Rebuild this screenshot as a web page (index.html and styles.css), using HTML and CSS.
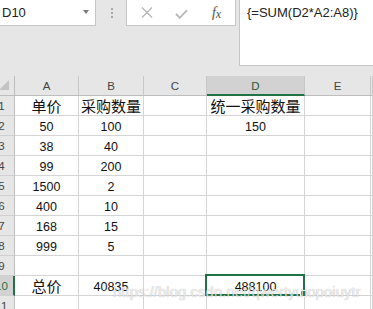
FILE: index.html
```html
<!DOCTYPE html>
<html lang="zh">
<head>
<meta charset="utf-8">
<link rel="stylesheet" href="styles.css">
</head>
<body>
<div class="app">
  <div class="toolbar">
    <div class="namebox"><span class="name">D10</span><span class="caret"></span></div>
    <div class="sep">
      <svg width="2" height="10" viewBox="0 0 2 10"><rect x="0" y="0" width="2" height="2"/><rect x="0" y="4" width="2" height="2"/><rect x="0" y="8" width="2" height="2"/></svg>
    </div>
    <div class="buttons">
      <span class="btn"><svg width="12" height="11" viewBox="0 0 12 11"><path d="M1 0.5 L11 10.5 M11 0.5 L1 10.5"/></svg></span>
      <span class="btn"><svg width="13" height="10" viewBox="0 0 13 10"><path d="M1 5 L4.8 8.8 L12 1.2"/></svg></span>
      <span class="btn fx"><i>f</i><i class="x">x</i></span>
    </div>
    <div class="formula">{=SUM(D2*A2:A8)}</div>
  </div>

  <div class="sheet">
    <div class="corner"><span class="tri"></span></div>
    <div class="h">A</div><div class="h">B</div><div class="h">C</div><div class="h sel">D</div><div class="h">E</div><div class="h"></div>

    <div class="rh"><span>1</span></div>
    <div class="c cjk">单价</div><div class="c cjk">采购数量</div><div class="c"></div><div class="c cjk">统一采购数量</div><div class="c"></div><div class="c"></div>

    <div class="rh"><span>2</span></div>
    <div class="c">50</div><div class="c">100</div><div class="c"></div><div class="c">150</div><div class="c"></div><div class="c"></div>

    <div class="rh"><span>3</span></div>
    <div class="c">38</div><div class="c">40</div><div class="c"></div><div class="c"></div><div class="c"></div><div class="c"></div>

    <div class="rh"><span>4</span></div>
    <div class="c">99</div><div class="c">200</div><div class="c"></div><div class="c"></div><div class="c"></div><div class="c"></div>

    <div class="rh"><span>5</span></div>
    <div class="c">1500</div><div class="c">2</div><div class="c"></div><div class="c"></div><div class="c"></div><div class="c"></div>

    <div class="rh"><span>6</span></div>
    <div class="c">400</div><div class="c">10</div><div class="c"></div><div class="c"></div><div class="c"></div><div class="c"></div>

    <div class="rh"><span>7</span></div>
    <div class="c">168</div><div class="c">15</div><div class="c"></div><div class="c"></div><div class="c"></div><div class="c"></div>

    <div class="rh"><span>8</span></div>
    <div class="c">999</div><div class="c">5</div><div class="c"></div><div class="c"></div><div class="c"></div><div class="c"></div>

    <div class="rh"><span>9</span></div>
    <div class="c"></div><div class="c"></div><div class="c"></div><div class="c"></div><div class="c"></div><div class="c"></div>

    <div class="rh sel"><span>10</span></div>
    <div class="c cjk">总价</div><div class="c">40835</div><div class="c"></div><div class="c active">488100<span class="handle"></span></div><div class="c"></div><div class="c"></div>

    <div class="rh"><span>11</span></div>
    <div class="c"></div><div class="c"></div><div class="c"></div><div class="c"></div><div class="c"></div><div class="c"></div>
  </div>

  <div class="watermark">https://blog.csdn.net/qwertyuiopoiuytr</div>
</div>
</body>
</html>
```

FILE: styles.css
```css
html, body {
  margin: 0;
  padding: 0;
}
body {
  background: #e6e6e6;
  font-family: "Liberation Sans", "Noto Sans CJK SC", sans-serif;
}
.app {
  position: relative;
  width: 373px;
  height: 309px;
  overflow: hidden;
  background: #e6e6e6;
}

/* ---------- formula bar ---------- */
.toolbar {
  display: flex;
  align-items: flex-start;
  height: 76px;
}
.namebox {
  box-sizing: border-box;
  width: 96px;
  height: 26px;
  background: #fff;
  border-right: 1px solid #c6c6c6;
  border-bottom: 1px solid #c6c6c6;
  display: flex;
  align-items: center;
  justify-content: space-between;
  padding: 0 6px 0 2px;
  font-size: 13px;
  line-height: 16px;
  color: #222;
}
.caret {
  width: 0;
  height: 0;
  border-left: 3.5px solid transparent;
  border-right: 3.5px solid transparent;
  border-top: 4px solid #7a7a7a;
  margin-top: -1px;
}
.sep {
  width: 30px;
  height: 26px;
  display: flex;
  align-items: center;
  justify-content: center;
}
.sep svg {
  fill: #a9a9a9;
  margin-left: 1px;
}
.buttons {
  box-sizing: border-box;
  width: 110px;
  height: 26px;
  background: #fff;
  border-left: 1px solid #c6c6c6;
  border-right: 1px solid #c6c6c6;
  border-bottom: 1px solid #c6c6c6;
  display: flex;
  align-items: center;
  padding-left: 2px;
}
.btn {
  width: 35px;
  height: 25px;
  display: flex;
  align-items: center;
  justify-content: center;
}
.btn svg {
  fill: none;
  stroke: #b7b7b7;
  stroke-width: 1.4;
}
.btn:nth-child(2) svg {
  stroke-width: 1.8;
  margin-top: 2px;
}
.fx {
  font-family: "Liberation Serif", serif;
  font-size: 14px;
  color: #505050;
  padding-top: 1px;
}
.fx i {
  font-style: italic;
}
.fx .x {
  font-size: 12px;
  margin-left: 0px;
  position: relative;
  top: 1px;
}
.formula {
  box-sizing: border-box;
  flex: 1;
  margin-left: 3px;
  height: 66px;
  background: #fff;
  border-left: 1px solid #c6c6c6;
  border-bottom: 1px solid #c6c6c6;
  padding: 5px 0 0 7px;
  font-size: 13px;
  line-height: 16px;
  color: #222;
  white-space: nowrap;
}

/* ---------- sheet ---------- */
.sheet {
  display: grid;
  grid-template-columns: 15px 64px 65px 63px 98px 66px 1fr;
  grid-template-rows: repeat(12, 20px);
  background: #fff;
}
.sheet > div {
  box-sizing: border-box;
  overflow: hidden;
}
.corner {
  background: #e6e6e6;
  border-right: 1px solid #bdbdbd;
  border-bottom: 1px solid #bdbdbd;
  position: relative;
}
.tri {
  position: absolute;
  left: 0;
  top: 4px;
  width: 0;
  height: 0;
  border-left: 10px solid transparent;
  border-bottom: 10px solid #c3c3c3;
  margin-left: -1px;
}
.h {
  background: #e6e6e6;
  border-right: 1px solid #c8c8c8;
  border-bottom: 1px solid #bdbdbd;
  display: flex;
  align-items: center;
  justify-content: center;
  font-size: 11.5px;
  color: #444;
  padding-top: 1px;
}
.h.sel {
  background: #d2d2d2;
  border-bottom: 2px solid #217346;
  color: #1d5c38;
}
.rh {
  background: #e6e6e6;
  border-right: 1px solid #bdbdbd;
  border-bottom: 1px solid #d0d0d0;
  display: flex;
  align-items: center;
  font-size: 11.5px;
  color: #444;
}
.rh span {
  flex: none;
  width: 25px;
  margin-left: -11px;
  text-align: center;
}
.rh.sel {
  background: #d2d2d2;
  border-right: 2px solid #217346;
  color: #217346;
}
.c {
  border-right: 1px solid #d4d4d4;
  border-bottom: 1px solid #d4d4d4;
  text-align: center;
  font-size: 12.5px;
  line-height: 16px;
  padding-top: 3px;
  color: #111;
  white-space: nowrap;
}
.c.cjk {
  font-family: "Noto Sans CJK SC", sans-serif;
  font-size: 15px;
  padding-top: 2px;
}
.sheet > .c.active {
  position: relative;
  overflow: visible;
  z-index: 2;
}
.c.active::after {
  content: "";
  position: absolute;
  top: -2px;
  left: -2px;
  right: -1px;
  bottom: -1px;
  border: 2px solid #217346;
}
.handle {
  position: absolute;
  right: -3px;
  bottom: -2px;
  width: 5px;
  height: 5px;
  background: #217346;
  border: 1px solid #fff;
  z-index: 3;
}

/* ---------- watermark ---------- */
.watermark {
  position: absolute;
  left: 113px;
  top: 284px;
  font-size: 15px;
  line-height: 15px;
  color: rgba(255, 255, 255, 0.75);
  text-shadow: 0 0 1px rgba(0, 0, 0, 0.35);
  white-space: nowrap;
  z-index: 5;
}
```
